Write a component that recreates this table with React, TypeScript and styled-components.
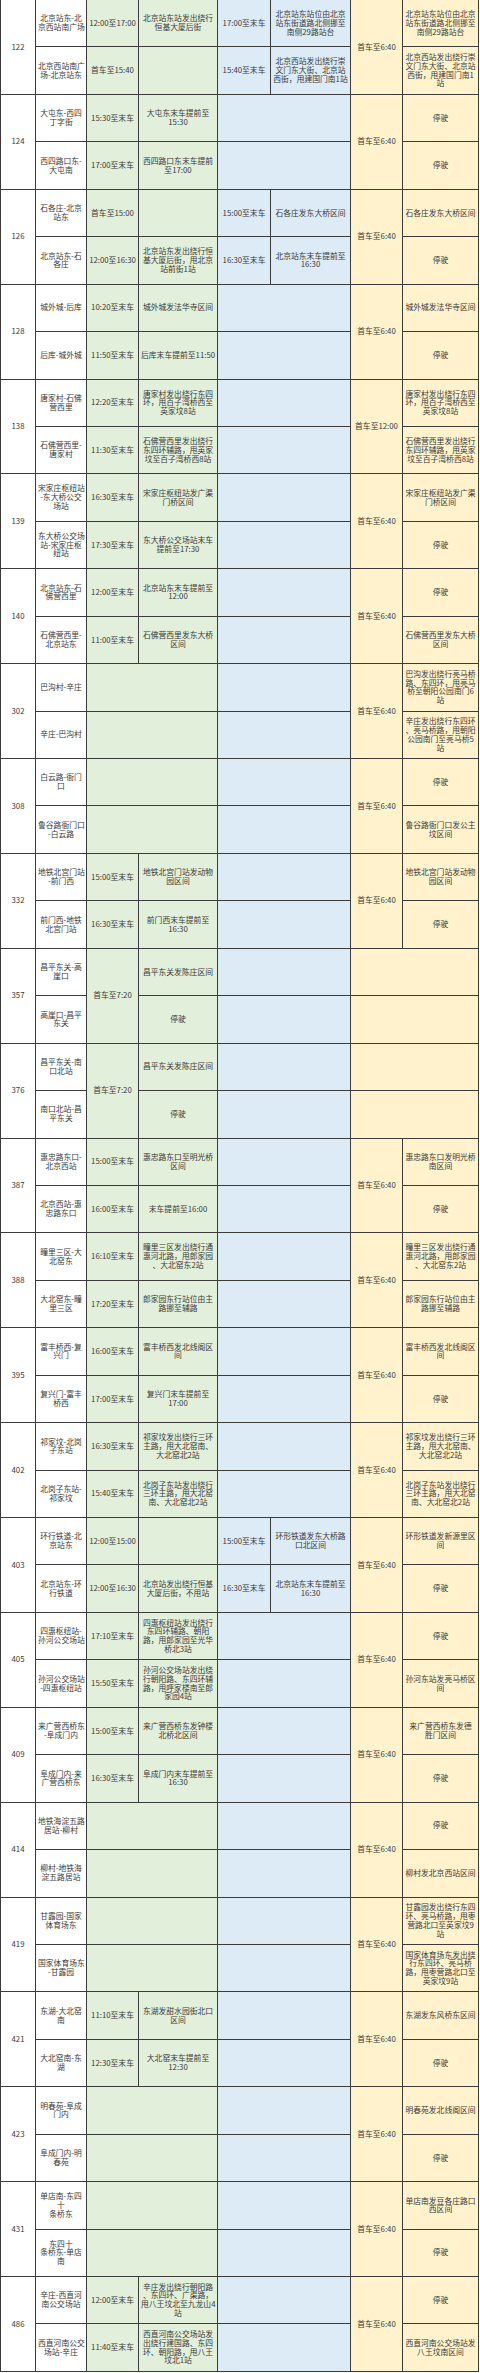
import React from 'react';
import styled, { createGlobalStyle } from 'styled-components';

const GlobalStyle = createGlobalStyle`
  body {
    margin: 0;
    padding: 0;
    background-color: #ffffff;
    font-family: 'Noto Sans CJK SC', 'Noto Sans', sans-serif;
  }
`;

type Tone = 'white' | 'green' | 'blue' | 'yellow';

const tones: Record<Tone, string> = {
  white: '#ffffff',
  green: '#e2efda',
  blue: '#ddebf7',
  yellow: '#fff2cc',
};

const Sheet = styled.div`
  width: 480px;
  overflow: hidden;
`;

const Table = styled.table`
  width: 478px;
  table-layout: fixed;
  border-collapse: collapse;
  margin-top: -1px;
`;

const Col = styled.col<{ $w: number }>`
  width: ${(p) => p.$w}px;
`;

const Row = styled.tr`
  height: 47.44px;
`;

const Cell = styled.td<{ $tone: Tone }>`
  background-color: ${(p) => tones[p.$tone]};
  border: 1px solid #3c3c3c;
  padding: 0 2px;
  color: #3a3a3a;
  font-size: 7.8px;
  line-height: 8.8px;
  text-align: center;
  vertical-align: middle;
  white-space: pre-line;
  word-break: keep-all;
  overflow: hidden;
`;

type Line = {
  dir: string;
  g?: [string, string];
  b?: [string, string];
  y?: string;
};

type Group = {
  no: string;
  gSpan?: string;
  first?: string;
  rows: [Line, Line];
};

const STOP = '停驶';

const groups: Group[] = [
  {
    no: '122',
    first: '首车至6:40',
    rows: [
      {
        dir: '北京站东-北\n京西站南广场',
        g: ['12:00至17:00', '北京站东站发出绕行\n恒基大厦后街'],
        b: ['17:00至末车', '北京站东站位由北京\n站东街道路北侧挪至\n南侧29路站台'],
        y: '北京站东站位由北京\n站东街道路北侧挪至\n南侧29路站台',
      },
      {
        dir: '北京西站南广\n场-北京站东',
        g: ['首车至15:40', ''],
        b: ['15:40至末车', '北京西站发出绕行崇\n文门东大街、北京站\n西街，甩建国门南1站'],
        y: '北京西站发出绕行崇\n文门东大街、北京站\n西街，甩建国门南1\n站',
      },
    ],
  },
  {
    no: '124',
    first: '首车至6:40',
    rows: [
      { dir: '大屯东-西四\n丁字街', g: ['15:30至末车', '大屯东末车提前至\n15:30'], y: STOP },
      { dir: '西四路口东-\n大屯南', g: ['17:00至末车', '西四路口东末车提前\n至17:00'], y: STOP },
    ],
  },
  {
    no: '126',
    first: '首车至6:40',
    rows: [
      {
        dir: '石各庄-北京\n站东',
        g: ['首车至15:00', ''],
        b: ['15:00至末车', '石各庄发东大桥区间'],
        y: '石各庄发东大桥区间',
      },
      {
        dir: '北京站东-石\n各庄',
        g: ['12:00至16:30', '北京站东发出绕行恒\n基大厦后街，甩北京\n站前街1站'],
        b: ['16:30至末车', '北京站东末车提前至\n16:30'],
        y: STOP,
      },
    ],
  },
  {
    no: '128',
    first: '首车至6:40',
    rows: [
      { dir: '城外城-后库', g: ['10:20至末车', '城外城发法华寺区间'], y: '城外城发法华寺区间' },
      { dir: '后库-城外城', g: ['11:50至末车', '后库末车提前至11:50'], y: STOP },
    ],
  },
  {
    no: '138',
    first: '首车至12:00',
    rows: [
      {
        dir: '唐家村-石佛\n营西里',
        g: ['12:20至末车', '唐家村发出绕行东四\n环，甩百子湾桥西至\n英家坟8站'],
        y: '唐家村发出绕行东四\n环，甩百子湾桥西至\n英家坟8站',
      },
      {
        dir: '石佛营西里-\n唐家村',
        g: ['11:30至末车', '石佛营西里发出绕行\n东四环辅路，甩英家\n坟至百子湾桥西8站'],
        y: '石佛营西里发出绕行\n东四环辅路，甩英家\n坟至百子湾桥西8站',
      },
    ],
  },
  {
    no: '139',
    first: '首车至6:40',
    rows: [
      {
        dir: '宋家庄枢纽站\n-东大桥公交\n场站',
        g: ['16:30至末车', '宋家庄枢纽站发广渠\n门桥区间'],
        y: '宋家庄枢纽站发广渠\n门桥区间',
      },
      {
        dir: '东大桥公交场\n站-宋家庄枢\n纽站',
        g: ['17:30至末车', '东大桥公交场站末车\n提前至17:30'],
        y: STOP,
      },
    ],
  },
  {
    no: '140',
    first: '首车至6:40',
    rows: [
      { dir: '北京站东-石\n佛营西里', g: ['12:00至末车', '北京站东末车提前至\n12:00'], y: STOP },
      {
        dir: '石佛营西里-\n北京站东',
        g: ['11:00至末车', '石佛营西里发东大桥\n区间'],
        y: '石佛营西里发东大桥\n区间',
      },
    ],
  },
  {
    no: '302',
    first: '首车至6:40',
    rows: [
      { dir: '巴沟村-辛庄', y: '巴沟发出绕行亮马桥\n路、东四环，甩亮马\n桥至朝阳公园南门6\n站' },
      { dir: '辛庄-巴沟村', y: '辛庄发出绕行东四环\n、亮马桥路，甩朝阳\n公园南门至亮马桥5\n站' },
    ],
  },
  {
    no: '308',
    first: '首车至6:40',
    rows: [
      { dir: '白云路-衙门\n口', y: STOP },
      { dir: '鲁谷路衙门口\n-白云路', y: '鲁谷路衙门口发公主\n坟区间' },
    ],
  },
  {
    no: '332',
    first: '首车至6:40',
    rows: [
      {
        dir: '地铁北宫门站\n-前门西',
        g: ['15:00至末车', '地铁北宫门站发动物\n园区间'],
        y: '地铁北宫门站发动物\n园区间',
      },
      { dir: '前门西-地铁\n北宫门站', g: ['16:30至末车', '前门西末车提前至\n16:30'], y: STOP },
    ],
  },
  {
    no: '357',
    gSpan: '首车至7:20',
    rows: [
      { dir: '昌平东关-高\n崖口', g: ['', '昌平东关发陈庄区间'] },
      { dir: '高崖口-昌平\n东关', g: ['', STOP] },
    ],
  },
  {
    no: '376',
    gSpan: '首车至7:20',
    rows: [
      { dir: '昌平东关-南\n口北站', g: ['', '昌平东关发陈庄区间'] },
      { dir: '南口北站-昌\n平东关', g: ['', STOP] },
    ],
  },
  {
    no: '387',
    first: '首车至6:40',
    rows: [
      {
        dir: '惠忠路东口-\n北京西站',
        g: ['15:00至末车', '惠忠路东口至明光桥\n区间'],
        y: '惠忠路东口发明光桥\n南区间',
      },
      { dir: '北京西站-惠\n忠路东口', g: ['16:00至末车', '末车提前至16:00'], y: STOP },
    ],
  },
  {
    no: '388',
    first: '首车至6:40',
    rows: [
      {
        dir: '疃里三区-大\n北窑东',
        g: ['16:10至末车', '疃里三区发出绕行通\n惠河北路，甩郎家园\n、大北窑东2站'],
        y: '疃里三区发出绕行通\n惠河北路，甩郎家园\n、大北窑东2站',
      },
      {
        dir: '大北窑东-疃\n里三区',
        g: ['17:20至末车', '郎家园东行站位由主\n路挪至辅路'],
        y: '郎家园东行站位由主\n路挪至辅路',
      },
    ],
  },
  {
    no: '395',
    first: '首车至6:40',
    rows: [
      {
        dir: '富丰桥西-复\n兴门',
        g: ['16:00至末车', '富丰桥西发北线阁区\n间'],
        y: '富丰桥西发北线阁区\n间',
      },
      { dir: '复兴门-富丰\n桥西', g: ['17:00至末车', '复兴门末车提前至\n17:00'], y: STOP },
    ],
  },
  {
    no: '402',
    first: '首车至6:40',
    rows: [
      {
        dir: '祁家坟-北岗\n子东站',
        g: ['16:30至末车', '祁家坟发出绕行三环\n主路，甩大北窑南、\n大北窑北2站'],
        y: '祁家坟发出绕行三环\n主路，甩大北窑南、\n大北窑北2站',
      },
      {
        dir: '北岗子东站-\n祁家坟',
        g: ['15:40至末车', '北岗子东站发出绕行\n三环主路，甩大北窑\n南、大北窑北2站'],
        y: '北岗子东站发出绕行\n三环主路，甩大北窑\n南、大北窑北2站',
      },
    ],
  },
  {
    no: '403',
    first: '首车至6:40',
    rows: [
      {
        dir: '环行铁道-北\n京站东',
        g: ['12:00至15:00', ''],
        b: ['15:00至末车', '环形铁道发东大桥路\n口北区间'],
        y: '环形铁道发新源里区\n间',
      },
      {
        dir: '北京站东-环\n行铁道',
        g: ['12:00至16:30', '北京站发出绕行恒基\n大厦后街，不甩站'],
        b: ['16:30至末车', '北京站东末车提前至\n16:30'],
        y: STOP,
      },
    ],
  },
  {
    no: '405',
    first: '首车至6:40',
    rows: [
      {
        dir: '四惠枢纽站-\n孙河公交场站',
        g: ['17:10至末车', '四惠枢纽站发出绕行\n东四环辅路、朝阳\n路，甩郎家园至光华\n桥北3站'],
        y: STOP,
      },
      {
        dir: '孙河公交场站\n-四惠枢纽站',
        g: ['15:50至末车', '孙河公交场站发出绕\n行朝阳路、东四环辅\n路，甩呼家楼南至郎\n家园4站'],
        y: '孙河东站发亮马桥区\n间',
      },
    ],
  },
  {
    no: '409',
    first: '首车至6:40',
    rows: [
      {
        dir: '来广营西桥东\n-阜成门内',
        g: ['15:00至末车', '来广营西桥东发钟楼\n北桥北区间'],
        y: '来广营西桥东发德\n胜门区间',
      },
      { dir: '阜成门内-来\n广营西桥东', g: ['16:30至末车', '阜成门内末车提前至\n16:30'], y: STOP },
    ],
  },
  {
    no: '414',
    first: '首车至6:40',
    rows: [
      { dir: '地铁海淀五路\n居站-柳村', y: STOP },
      { dir: '柳村-地铁海\n淀五路居站', y: '柳村发北京西站区间' },
    ],
  },
  {
    no: '419',
    first: '首车至6:40',
    rows: [
      { dir: '甘露园-国家\n体育场东', y: '甘露园发出绕行东四\n环、亮马桥路，甩枣\n营路北口至英家坟9\n站' },
      { dir: '国家体育场东\n-甘露园', y: '国家体育场东发出绕\n行东四环、亮马桥\n路，甩枣营路北口至\n英家坟9站' },
    ],
  },
  {
    no: '421',
    first: '首车至6:40',
    rows: [
      {
        dir: '东湖-大北窑\n南',
        g: ['11:10至末车', '东湖发甜水园街北口\n区间'],
        y: '东湖发东风桥东区间',
      },
      { dir: '大北窑南-东\n湖', g: ['12:30至末车', '大北窑末车提前至\n12:30'], y: STOP },
    ],
  },
  {
    no: '423',
    first: '首车至6:40',
    rows: [
      { dir: '明春苑-阜成\n门内', y: '明春苑发北线阁区间' },
      { dir: '阜成门内-明\n春苑', y: STOP },
    ],
  },
  {
    no: '431',
    first: '首车至6:40',
    rows: [
      { dir: '单店南-东四\n十\n条桥东', y: '单店南发豆各庄路口\n西区间' },
      { dir: '东四十\n条桥东-单店\n南', y: STOP },
    ],
  },
  {
    no: '486',
    first: '首车至6:40',
    rows: [
      {
        dir: '辛庄-西直河\n南公交场站',
        g: ['12:00至末车', '辛庄发出绕行朝阳路\n、东四环、广渠路，\n甩八王坟北至九龙山4\n站'],
        y: STOP,
      },
      {
        dir: '西直河南公交\n场站-辛庄',
        g: ['11:40至末车', '西直河南公交场站发\n出绕行建国路、东四\n环、朝阳路，甩八王\n坟北1站'],
        y: '西直河南公交场站发\n八王坟南区间',
      },
    ],
  },
];

const widths = [35, 51, 52, 79, 53, 80, 52, 76];

function GroupRows({ group }: { group: Group }) {
  return (
    <>
      {group.rows.map((line, i) => (
        <Row key={i}>
          {i === 0 && (
            <Cell $tone="white" rowSpan={2}>
              {group.no}
            </Cell>
          )}
          <Cell $tone="white">{line.dir}</Cell>

          {group.gSpan ? (
            <>
              {i === 0 && (
                <Cell $tone="green" rowSpan={2}>
                  {group.gSpan}
                </Cell>
              )}
              <Cell $tone="green">{line.g?.[1]}</Cell>
            </>
          ) : line.g ? (
            <>
              <Cell $tone="green">{line.g[0]}</Cell>
              <Cell $tone="green">{line.g[1]}</Cell>
            </>
          ) : (
            <Cell $tone="green" colSpan={2} />
          )}

          {line.b ? (
            <>
              <Cell $tone="blue">{line.b[0]}</Cell>
              <Cell $tone="blue">{line.b[1]}</Cell>
            </>
          ) : (
            <Cell $tone="blue" colSpan={2} />
          )}

          {group.first ? (
            <>
              {i === 0 && (
                <Cell $tone="yellow" rowSpan={2}>
                  {group.first}
                </Cell>
              )}
              <Cell $tone="yellow">{line.y}</Cell>
            </>
          ) : (
            <Cell $tone="yellow" colSpan={2} />
          )}
        </Row>
      ))}
    </>
  );
}

function App() {
  return (
    <>
      <GlobalStyle />
      <Sheet>
        <Table>
          <colgroup>
            {widths.map((w, i) => (
              <Col key={i} $w={w} />
            ))}
          </colgroup>
          <tbody>
            {groups.map((g) => (
              <GroupRows key={g.no} group={g} />
            ))}
          </tbody>
        </Table>
      </Sheet>
    </>
  );
}

export default App;
